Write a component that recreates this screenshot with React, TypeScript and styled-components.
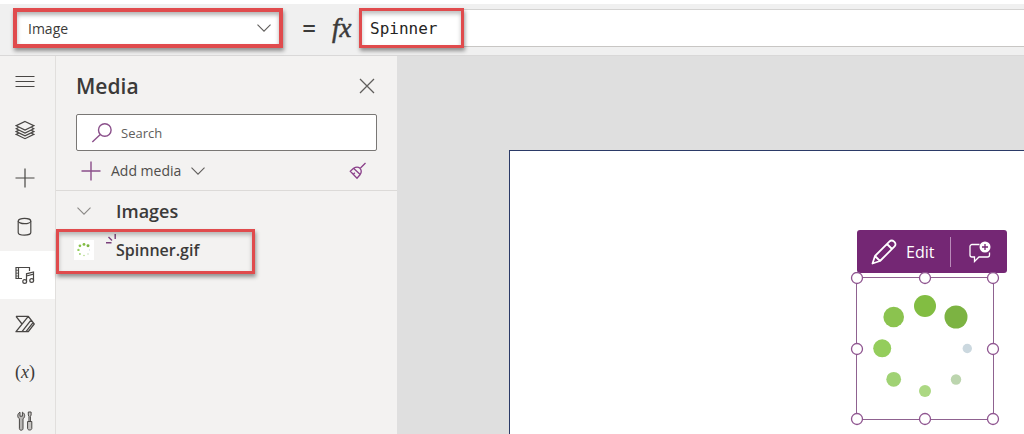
import React from "react";
import styled, { createGlobalStyle } from "styled-components";

const ink = "#3b3a39";
const purple = "#742774";
const red = "#e04b4d";

const GlobalStyle = createGlobalStyle`
  * { box-sizing: border-box; }
  body {
    margin: 0;
    background: #fff;
    color: ${ink};
    font-family: "Open Sans", "Noto Sans", sans-serif;
    font-size: 14px;
  }
  button, input, select { font: inherit; color: inherit; }
  svg { display: block; flex: none; }
`;

const Studio = styled.div`
  display: flex;
  flex-direction: column;
  height: 100vh;
  overflow: hidden;
  padding-top: 4px;
`;

const FormulaBar = styled.header`
  display: flex;
  align-items: center;
  flex: none;
  height: 52px;
  padding: 0 0 4px 13px;
  background: #f0f0f0;
  border-bottom: 1px solid #d9d8d8;
`;

const PropertyPicker = styled.div`
  position: relative;
  display: flex;
  align-items: center;
  width: 270px;
  height: 40px;
  border: 4px solid ${red};
  background: #fff;
  box-shadow: 1px 3px 4px rgba(0, 0, 0, 0.4), inset 0 3px 4px rgba(0, 0, 0, 0.3);

  svg {
    position: absolute;
    right: 8px;
    pointer-events: none;
  }
`;

const PropertySelect = styled.select`
  width: 100%;
  height: 100%;
  padding: 2px 32px 0 11px;
  border: 0;
  outline: 0;
  appearance: none;
  background: transparent;
  font-size: 14px;
`;

const Equals = styled.span`
  width: 20px;
  margin-left: 16px;
  font-size: 24px;
  font-weight: 600;
  line-height: 32px;
  text-align: center;
`;

const Fx = styled.span`
  display: flex;
  align-items: baseline;
  width: 29px;
  margin-left: 13px;
  font-family: "Liberation Serif", serif;
  font-style: italic;
  font-size: 27px;
  line-height: 32px;
  white-space: nowrap;
  -webkit-text-stroke: 0.5px currentColor;
`;

const FormulaField = styled.div`
  position: relative;
  flex: 1;
  height: 38px;
  border-top: 1px solid #d4d3d2;
  border-bottom: 1px solid #c8c6c4;
  background: #fff;
`;

const FormulaInput = styled.input`
  width: 100%;
  height: 100%;
  padding: 2px 9px 0;
  border: 0;
  outline: 0;
  background: transparent;
  color: #252423;
  font-family: "DejaVu Sans Mono", monospace;
  font-size: 16px;
`;

const Highlight = styled.span<{ $width: number; $height: number; $top: number; $left: number }>`
  position: absolute;
  top: ${(p) => p.$top}px;
  left: ${(p) => p.$left}px;
  width: ${(p) => p.$width}px;
  height: ${(p) => p.$height}px;
  border: 3px solid ${red};
  box-shadow: 1px 3px 4px rgba(0, 0, 0, 0.4), inset 0 3px 4px rgba(0, 0, 0, 0.25);
  pointer-events: none;
`;

const Workspace = styled.div`
  display: flex;
  flex: 1;
  min-height: 0;
`;

const Rail = styled.nav`
  display: grid;
  grid-template-rows: repeat(4, 48px 49px);
  flex: none;
  width: 56px;
  padding-top: 1px;
  background: #f3f2f1;
  border-right: 1px solid #e1dfdd;
`;

const RailButton = styled.button<{ $active?: boolean }>`
  display: flex;
  align-items: center;
  justify-content: center;
  padding: 0 5px 0 0;
  border: 0;
  background: ${(p) => (p.$active ? "#fff" : "transparent")};
`;

const Variable = styled.span`
  font-family: "Liberation Serif", serif;
  font-size: 18px;
  white-space: nowrap;
`;

const Panel = styled.aside`
  flex: none;
  width: 341px;
  background: #f3f2f1;
`;

const PanelHeader = styled.div`
  display: flex;
  align-items: center;
  justify-content: space-between;
  height: 58px;
  padding: 2px 22px 0 20px;
`;

const PanelTitle = styled.h1`
  margin: 0;
  font-size: 21px;
  font-weight: 600;
  line-height: 28px;
`;

const IconButton = styled.button`
  display: flex;
  padding: 0;
  border: 0;
  background: transparent;
`;

const SearchBox = styled.label`
  display: flex;
  align-items: center;
  gap: 8px;
  height: 37px;
  margin: 0 20px;
  padding: 0 14px;
  border: 1px solid #797775;
  border-radius: 2px;
  background: #fff;
`;

const SearchInput = styled.input`
  flex: 1;
  min-width: 0;
  padding: 0;
  border: 0;
  outline: 0;
  background: transparent;
  font-size: 13px;

  &::placeholder { color: #605e5c; opacity: 1; }
`;

const Commands = styled.div`
  display: flex;
  align-items: center;
  justify-content: space-between;
  height: 40px;
  padding: 0 30px 0 25px;
  border-bottom: 1px solid #dcdad8;
`;

const AddMedia = styled.button`
  display: flex;
  align-items: center;
  gap: 10px;
  padding: 0;
  border: 0;
  background: transparent;
  color: #4f4d4b;
`;

const Group = styled.h2`
  display: flex;
  align-items: center;
  gap: 25px;
  height: 40px;
  margin: 0;
  padding: 0 0 0 21px;
  font-size: 18px;
  font-weight: 600;
`;

const MediaRow = styled.div`
  position: relative;
  display: flex;
  align-items: center;
  height: 40px;
  padding: 0 0 2px 18px;
  font-size: 16px;
  font-weight: 600;
`;

const Thumb = styled.svg`
  background: #fff;
`;

const NewMark = styled.svg`
  align-self: flex-start;
  margin: 3px 0 0 12px;
`;

const Canvas = styled.main`
  display: flex;
  flex: 1;
  min-width: 0;
  padding: 94px 0 0 112px;
  background: #dfdfdf;
`;

const Artboard = styled.section`
  position: relative;
  flex: 1;
  overflow: hidden;
  border: solid #2b3a67;
  border-width: 1px 0 0 1px;
  background: #fff;
`;

const FloatingBar = styled.div`
  position: absolute;
  top: 79px;
  left: 347px;
  display: flex;
  align-items: center;
  width: 150px;
  height: 43px;
  padding: 0 14px;
  border-radius: 3px;
  background: ${purple};
`;

const BarButton = styled.button`
  display: flex;
  align-items: center;
  gap: 9px;
  padding: 0;
  border: 0;
  background: transparent;
  color: #fff;
  font-size: 16px;
`;

const Divider = styled.span`
  width: 1px;
  height: 30px;
  margin: 0 18px 0 16px;
  background: #b98bb9;
`;

const SelectedImage = styled.svg`
  position: absolute;
  top: 121px;
  left: 340px;
`;

const dots = [
  { x: 75, y: 34, r: 11, c: "#82bd42" },
  { x: 106, y: 45, r: 11.5, c: "#7cb342" },
  { x: 117.3, y: 76.5, r: 4.7, c: "#cbd8df" },
  { x: 106, y: 107.5, r: 5.2, c: "#bcd5ae" },
  { x: 75, y: 119, r: 6, c: "#acd883" },
  { x: 43.7, y: 107.3, r: 7.4, c: "#a0d274" },
  { x: 32.2, y: 76.3, r: 9, c: "#94cd5c" },
  { x: 43.7, y: 45, r: 10.3, c: "#8bc34f" },
];

const Dots = () => (
  <>
    {dots.map((d) => (
      <circle key={d.c} cx={d.x} cy={d.y} r={d.r} fill={d.c} />
    ))}
  </>
);

const Chevron = ({ color = "#605e5c" }) => (
  <svg width="14" height="14" viewBox="0 0 14 14" fill="none" stroke={color} strokeWidth="1.1">
    <path d="M.5 3.700 7 10.200l6.500-6.500" />
  </svg>
);

const Glyph = ({ children }: { children: React.ReactNode }) => (
  <svg width="20" height="20" viewBox="0 0 20 20" fill="none" stroke="#484644" strokeWidth="1.2">
    {children}
  </svg>
);

const railItems = [
  { label: "Menu", icon: <Glyph><path d="M.5 5.500h19M.5 10.500h19M.5 15.500h19" /></Glyph> },
  {
    label: "Tree view",
    icon: (
      <Glyph>
        <path d="m10 1.500 8.800 4.200L10 10 1.200 5.700zM3.400 7.500 1.200 8.700l8.800 4.300 8.800-4.300-2.200-1.200M3.400 10.400l-2.200 1.200L10 15.900l8.800-4.300-2.200-1.200M3.400 13.300l-2.200 1.100L10 18.700l8.800-4.300-2.200-1.100" />
      </Glyph>
    ),
  },
  { label: "Insert", icon: <Glyph><path d="M.5 10h19M10 .5v19" /></Glyph> },
  {
    label: "Data",
    icon: (
      <Glyph>
        <ellipse cx="9.500" cy="4" rx="6.300" ry="2.700" />
        <path d="M3.200 4v11.500c0 1.500 2.800 2.700 6.300 2.700s6.300-1.200 6.300-2.700V4" />
      </Glyph>
    ),
  },
  {
    label: "Media",
    icon: (
      <Glyph>
        <path d="M7 13.500H1V2.500h13.500V6M3.500 2.500v11" />
        <path d="M1 5.300h2.500M1 8.200h2.500M1 11h2.500" strokeWidth=".8" />
        <path d="M11.500 16.500V8.800l7-1.800v8.500M11.500 11l7-1.800" />
        <circle cx="9.700" cy="16.500" r="1.900" />
        <circle cx="16.700" cy="15.500" r="1.900" />
      </Glyph>
    ),
  },
  {
    label: "Power Automate",
    icon: (
      <Glyph>
        <path d="M1 2.300h12.300l5.900 7.700-5.900 7.700H1L13.300 2.300M1 2.300l6 7.700M7 17.700l9-11.500M11 17.700l7-9" strokeWidth="1.300" strokeLinejoin="round" />
      </Glyph>
    ),
  },
  { label: "Variables", icon: <Variable>(<i>x</i>)</Variable> },
  {
    label: "Advanced tools",
    icon: (
      <Glyph>
        <path d="M5 1.200v4h2.400v-4c3 1.500 2.800 5.400.6 6.500v10c0 2-3.600 2-3.600 0v-10C2.200 6.600 2 2.700 5 1.200z" fill="#b9b7b5" strokeWidth="1" />
        <path d="M13.300 1h2.800v3l-.7 1.500v5M14 10.500v-5L13.300 4V1M12.600 10.500h4.200v7c0 2-4.200 2-4.200 0z" fill="#c8c6c4" strokeWidth="1" />
      </Glyph>
    ),
  },
];

const handles = [
  [7, 6], [75, 6], [143, 6],
  [7, 77], [143, 77],
  [7, 147], [75, 147], [143, 147],
];

export default function App() {
  return (
    <Studio>
      <GlobalStyle />
      <FormulaBar>
        <PropertyPicker>
          <PropertySelect aria-label="Property" defaultValue="Image">
            <option>Image</option>
          </PropertySelect>
          <Chevron />
        </PropertyPicker>
        <Equals>=</Equals>
        <Fx>fx</Fx>
        <FormulaField>
          <FormulaInput aria-label="Formula" defaultValue="Spinner" spellCheck={false} />
          <Highlight $top={-2} $left={-2} $width={105} $height={40} />
        </FormulaField>
      </FormulaBar>

      <Workspace>
        <Rail aria-label="Authoring">
          {railItems.map((item) => (
            <RailButton key={item.label} aria-label={item.label} $active={item.label === "Media"}>
              {item.icon}
            </RailButton>
          ))}
        </Rail>

        <Panel>
          <PanelHeader>
            <PanelTitle>Media</PanelTitle>
            <IconButton aria-label="Close">
              <svg width="16" height="16" viewBox="0 0 16 16" stroke="#605e5c" strokeWidth="1.300">
                <path d="m1 1 14 14M15 1 1 15" />
              </svg>
            </IconButton>
          </PanelHeader>

          <SearchBox>
            <svg width="22" height="22" viewBox="0 0 22 22" fill="none" stroke="#8a4f8a" strokeWidth="1.400">
              <circle cx="13.800" cy="8" r="6.300" />
              <path d="m9.300 12.500-8 7.500" />
            </svg>
            <SearchInput aria-label="Search media" placeholder="Search" />
          </SearchBox>

          <Commands>
            <AddMedia>
              <svg width="20" height="20" viewBox="0 0 20 20" stroke="#8a4f8a" strokeWidth="1.400">
                <path d="M.5 10h19M10 .5v19" />
              </svg>
              Add media
              <Chevron />
            </AddMedia>
            <IconButton aria-label="Remove unused media">
              <svg width="18" height="18" viewBox="0 0 18 18" fill="none" stroke="#8a3f8a" strokeWidth="1.300">
                <path d="m16.500 1-5 5M4.500 6.300c2-1.200 4.700-1.500 6.200-.2 1.600 1.500 1.800 4.300.5 6.400L8 16.200 1.300 9.300zM4.500 6.300l6.700 6.200M4.300 12.400l1.500-1.600" />
              </svg>
            </IconButton>
          </Commands>

          <Group>
            <Chevron color="#8a8886" />
            Images
          </Group>
          <MediaRow>
            <Thumb width="20" height="20" viewBox="0 0 150 154">
              <Dots />
            </Thumb>
            <NewMark width="10" height="10" viewBox="0 0 10 10" stroke="#7a3f7a" strokeWidth="1.400">
              <path d="M0 8.700h5.500M2.500 3l3.500 3.500M9.200 0v5" />
            </NewMark>
            Spinner.gif
            <Highlight $top={-2} $left={0} $width={199} $height={45} />
          </MediaRow>
        </Panel>

        <Canvas>
          <Artboard aria-label="Screen">
            <FloatingBar>
              <BarButton>
                <svg width="26" height="26" viewBox="0 0 26 26" fill="none" stroke="#fff" strokeWidth="1.800" strokeLinejoin="round">
                  <path d="M1.500 24.500 4 17 18.600 2.400c1.200-1.200 3-1.200 4.200 0l.8.800c1.200 1.200 1.200 3 0 4.200L9 22zM4 17l5 5M16 5l5 5" />
                </svg>
                Edit
              </BarButton>
              <Divider />
              <BarButton aria-label="Add comment">
                <svg width="22" height="22" viewBox="0 0 22 22" fill="none" stroke="#fff" strokeWidth="1.300">
                  <path d="M10.500 3.500H3c-1 0-2 1-2 2V14c0 1 1 2 2 2h2.500v4.500L10 16h8.500c1 0 2-1 2-2v-2.500" />
                  <circle cx="16" cy="6" r="5.500" fill="#fff" stroke="none" />
                  <path d="M16 3v6M13 6h6" stroke={purple} />
                </svg>
              </BarButton>
            </FloatingBar>
            <SelectedImage width="150" height="154" viewBox="0 0 150 154" role="img" aria-label="Spinner">
              <rect x="6.500" y="5.500" width="137" height="142" fill="#fff" stroke="#8f6290" />
              <Dots />
              {handles.map(([x, y]) => (
                <circle key={`${x}-${y}`} cx={x} cy={y} r="5.500" fill="#fff" stroke="#8f5590" strokeWidth="1.300" />
              ))}
            </SelectedImage>
          </Artboard>
        </Canvas>
      </Workspace>
    </Studio>
  );
}
